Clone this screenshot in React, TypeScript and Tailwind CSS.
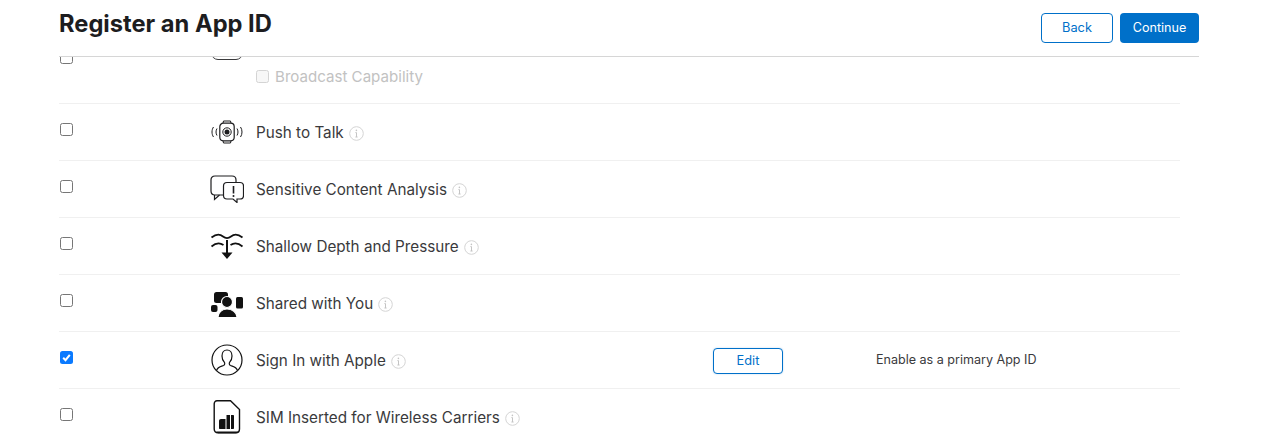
import React from "react";

const font = { fontFamily: "Inter, sans-serif" };

const Check = ({ checked = false }: { checked?: boolean }) =>
  checked ? (
    <span className="flex h-[13px] w-[13px] items-center justify-center rounded-[2.5px] bg-[#0a7aff]">
      <svg width="11" height="11" viewBox="0 0 11 11" fill="none">
        <path d="M2.2 5.8 4.5 8.2 8.8 2.8" stroke="#fff" strokeWidth="2" />
      </svg>
    </span>
  ) : (
    <span className="block h-[13px] w-[13px] rounded-[2.5px] border border-[#767676] bg-white" />
  );

const Info = () => (
  <svg width="15" height="15" viewBox="0 0 15 15" fill="none" className="ml-[5px] mt-px">
    <circle cx="7.5" cy="7.5" r="6.8" stroke="#d4d4d4" />
    <path d="M7.5 6.6v4.4M6.4 11h2.2M6.4 6.6h1.1" stroke="#c4c4c4" />
    <circle cx="7.4" cy="4.4" r=".8" fill="#c4c4c4" />
  </svg>
);

const PushToTalk = () => (
  <svg width="34" height="24" viewBox="0 0 34 24" fill="none" stroke="#1d1d1f">
    <rect x="9.8" y="3.2" width="14.4" height="17.6" rx="3.5" strokeWidth="1.2" />
    <path d="M13 3.2 13.5 1h7l.5 2.2M13 20.800 13.500 23h7l.5-2.200" strokeWidth="1" />
    <circle cx="17" cy="12" r="4.2" strokeWidth="1" />
    <circle cx="17" cy="12" r="2.5" fill="#1d1d1f" stroke="none" />
    <path d="M7 8.500c-1.300 2-1.300 5 0 7M3.500 7c-2 2.800-2 7.200 0 10M27 8.500c1.300 2 1.300 5 0 7M30.500 7c2 2.800 2 7.200 0 10" strokeWidth="1" />
  </svg>
);

const Sensitive = () => (
  <svg width="34" height="28" viewBox="0 0 34 28" fill="none" stroke="#1d1d1f" strokeWidth="1.2">
    <path d="M13 20H5c-2.500 0-4-1.500-4-4V5c0-2.500 1.500-4 4-4h17c2.500 0 4 1.500 4 4v2" />
    <path d="M4.500 20v4.500L9.500 20" />
    <path d="M13.500 11c0-2 1.200-3.500 3.500-3.500h13c2 0 3.500 1.500 3.500 3.500v9.500c0 2-1.500 3.500-3.500 3.500h-3v3.500L23 24h-6c-2.300 0-3.500-1.500-3.500-3.500z" fill="#fff" />
    <path d="M23.500 11v7.500" strokeWidth="1.6" />
    <circle cx="23.500" cy="21" r="1" fill="#1d1d1f" stroke="none" />
  </svg>
);

const Depth = () => (
  <svg width="34" height="28" viewBox="0 0 34 28" fill="none" stroke="#111" strokeWidth="1.7">
    <path d="M1.500 5.500C6 2 10 2 13 4.500c2.500 2 5.500 2 8 0 3-2.500 7-2.500 11.500 1" />
    <path d="M1.500 14.500C6 10.500 10 10.500 13.500 13M20.500 13c3.500-2.500 7.500-2.500 12 1.500" />
    <path d="M17 8v14" strokeWidth="2" />
    <path d="M11.500 20.500h11L17 27z" fill="#111" stroke="none" />
  </svg>
);

const Shared = () => (
  <svg width="34" height="28" viewBox="0 0 34 28" fill="#111">
    <rect x="4" y="3" width="14" height="11" rx="2.5" />
    <rect x="1" y="16" width="6.5" height="7" rx="2" />
    <rect x="26" y="8" width="7" height="11.5" rx="1.5" />
    <path d="M8 28.500c0-5 4-8.500 9-8.500s10 3.500 10 8.500z" stroke="#fff" strokeWidth="1.2" />
    <circle cx="17" cy="13" r="5.5" stroke="#fff" strokeWidth="1.2" />
  </svg>
);

const Person = () => (
  <svg width="32" height="32" viewBox="0 0 32 32" fill="none" stroke="#111" strokeWidth="1.2">
    <circle cx="16" cy="16" r="15" />
    <path d="M5.500 26.500c1-3.500 4-4 7-5 1.500-.6 1.500-2.500.7-3.500-1.500-1.500-2.200-3.500-2.200-6 0-3.500 2-6 5-6s5 2.500 5 6c0 2.500-.7 4.500-2.200 6-.8 1-.8 2.900.7 3.500 3 1 6 1.500 7 5" />
  </svg>
);

const Sim = () => (
  <svg width="28" height="34" viewBox="0 0 28 34" fill="none">
    <path d="M4 .8h13.500L26.500 9.500V29c0 2.300-1.500 3.800-3.800 3.800H5c-2.500 0-3.800-1.500-3.800-3.800V3.800C1.200 2 2.300.8 4 .8z" stroke="#111" strokeWidth="1.4" />
    <path d="M3 31.500h22.500l-2 1.800H5z" fill="#111" />
    <path d="M8 19h4.500v10H7c-.6 0-1-.4-1-1v-7c0-1.200.8-2 2-2zM13.500 15h3.500v14h-3.500zM18 15h2c.7 0 1 .4 1 1v12c0 .6-.4 1-1 1h-2z" fill="#111" />
  </svg>
);

const rows = [
  { name: "Push to Talk", icon: <PushToTalk /> },
  { name: "Sensitive Content Analysis", icon: <Sensitive /> },
  { name: "Shallow Depth and Pressure", icon: <Depth /> },
  { name: "Shared with You", icon: <Shared /> },
  { name: "Sign In with Apple", icon: <Person />, checked: true, edit: true, note: "Enable as a primary App ID" },
  { name: "SIM Inserted for Wireless Carriers", icon: <Sim /> },
];

export default function App() {
  return (
    <div className="h-[443px] w-[1270px] overflow-hidden bg-white pl-[59px] pr-[71px]" style={font}>
      <header className="flex h-[57px] items-start justify-between border-b border-[#d6d6d6]">
        <h1 className="mt-[9px] text-[23.7px] leading-[30px] font-bold text-[#1d1d1f]">Register an App ID</h1>
        <div className="mt-[13px] flex gap-[7px]">
          <button className="h-[30px] w-[72px] rounded-[4px] border border-[#0070c9] bg-white text-[12.8px] text-[#0070c9]">Back</button>
          <button className="h-[30px] w-[79px] rounded-[4px] bg-[#0070c9] text-[12.6px] text-white">Continue</button>
        </div>
      </header>

      <div className="h-[386px] w-[1121px] overflow-hidden">
        <div className="relative h-[47px] border-b border-[#f0f0f0]">
          <span className="absolute top-[-6px] left-px"><Check /></span>
          <div className="absolute top-[-30px] left-[152px] h-[33px] w-[32px] rounded-[7px] border-[1.5px] border-[#3a3a3c]" />
          <div className="ml-[197px] flex items-center pt-[12px]">
            <span className="block h-[13px] w-[13px] -translate-y-px rounded-[2.5px] border border-[#d4d4d4] bg-[#f7f7f7]" />
            <span className="ml-[6px] text-[15.1px] leading-[16px] text-[#c2c2c2]">Broadcast Capability</span>
          </div>
        </div>
        {rows.map((r) => (
          <div key={r.name} className="flex h-[57px] items-center border-b border-[#f0f0f0] last:border-transparent">
            <div className="mb-[5px] w-[151px] pl-px"><Check checked={r.checked} /></div>
            <div className="flex w-[34px] justify-center">{r.icon}</div>
            <div className="mt-[2px] ml-[12px] flex w-[457px] items-center">
              <span className="text-[15.25px] leading-[20px] text-[#3a3a3c]">{r.name}</span>
              <Info />
            </div>
            {r.edit && (
              <>
                <button className="mt-px h-[26px] w-[70px] rounded-[4px] border border-[#0070c9] bg-white text-[12.8px] text-[#0070c9] shadow-[0_0_2px_rgba(0,112,201,0.25)]">Edit</button>
                <span className="ml-[93px] text-[12.55px] text-[#3a3a3c]">{r.note}</span>
              </>
            )}
          </div>
        ))}
      </div>
    </div>
  );
}
